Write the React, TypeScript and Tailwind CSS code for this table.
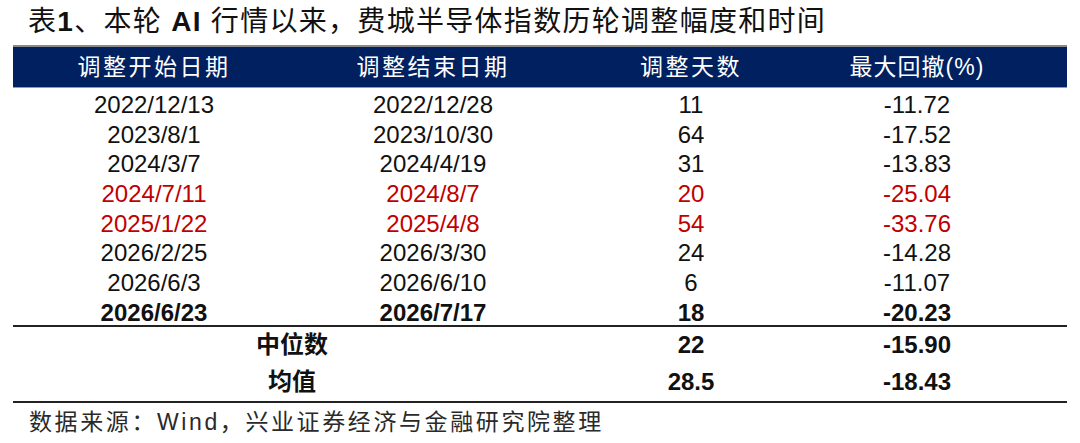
const FONT = "font-['Liberation_Sans','Noto_Sans_CJK_SC',sans-serif]";

interface Row {
  start: string;
  end: string;
  days: string;
  drawdown: string;
  red?: boolean;
  bold?: boolean;
}

const rows: Row[] = [
  { start: "2022/12/13", end: "2022/12/28", days: "11", drawdown: "-11.72" },
  { start: "2023/8/1", end: "2023/10/30", days: "64", drawdown: "-17.52" },
  { start: "2024/3/7", end: "2024/4/19", days: "31", drawdown: "-13.83" },
  { start: "2024/7/11", end: "2024/8/7", days: "20", drawdown: "-25.04", red: true },
  { start: "2025/1/22", end: "2025/4/8", days: "54", drawdown: "-33.76", red: true },
  { start: "2026/2/25", end: "2026/3/30", days: "24", drawdown: "-14.28" },
  { start: "2026/6/3", end: "2026/6/10", days: "6", drawdown: "-11.07" },
  { start: "2026/6/23", end: "2026/7/17", days: "18", drawdown: "-20.23", bold: true },
];

const cols = "grid grid-cols-[282px_276px_240px_212px_1fr]";
const sumCols = "grid grid-cols-[558px_240px_212px_1fr] h-[37px] items-center";

export default function App() {
  return (
    <div className={`w-[1080px] h-[443px] bg-white px-[13px] ${FONT} text-black overflow-hidden`}>
      {/* Title */}
      <div className="h-[45px] pt-[3px] pl-[15px] text-[28px] leading-[38px] tracking-[1.3px] text-[#111] whitespace-pre">
        表<span className="font-bold">1</span>、本轮 <span className="font-bold">AI</span> 行情以来，费城半导体指数历轮调整幅度和时间
      </div>

      {/* Header */}
      <div className={`${cols} h-[43px] bg-[#002060] border-t-[2px] border-t-[#8a8a8a] border-b border-b-[#9a9a9a] text-white text-[23px] tracking-[2.5px] items-center`}>
        <div className="text-center">调整开始日期</div>
        <div className="text-center">调整结束日期</div>
        <div className="text-center">调整天数</div>
        <div className="text-center tracking-[1px]">最大回撤(%)</div>
        <div />
      </div>

      {/* Data rows */}
      <div className="-mt-[1px]">
        {rows.map((r) => (
          <div
            key={r.start}
            className={`${cols} h-[29.7px] items-center text-[24px] ${r.red ? "text-[#c00000]" : "text-[#111]"} ${r.bold ? "font-bold" : ""}`}
          >
            <div className="text-center">{r.start}</div>
            <div className="text-center">{r.end}</div>
            <div className="text-center">{r.days}</div>
            <div className="text-center">{r.drawdown}</div>
            <div />
          </div>
        ))}
      </div>

      {/* Summary */}
      <div className="border-t-[2px] border-b-[2px] border-[#222] text-[24px] font-bold text-[#111]">
        <div className={sumCols}>
          <div className="text-center">中位数</div>
          <div className="text-center">22</div>
          <div className="text-center">-15.90</div>
          <div />
        </div>
        <div className={sumCols}>
          <div className="text-center">均值</div>
          <div className="text-center">28.5</div>
          <div className="text-center">-18.43</div>
          <div />
        </div>
      </div>

      {/* Source */}
      <div className="pl-[16px] pt-[2px] text-[23px] tracking-[2.6px] text-[#2a2a2a]">
        数据来源：Wind，兴业证券经济与金融研究院整理
      </div>
    </div>
  );
}
